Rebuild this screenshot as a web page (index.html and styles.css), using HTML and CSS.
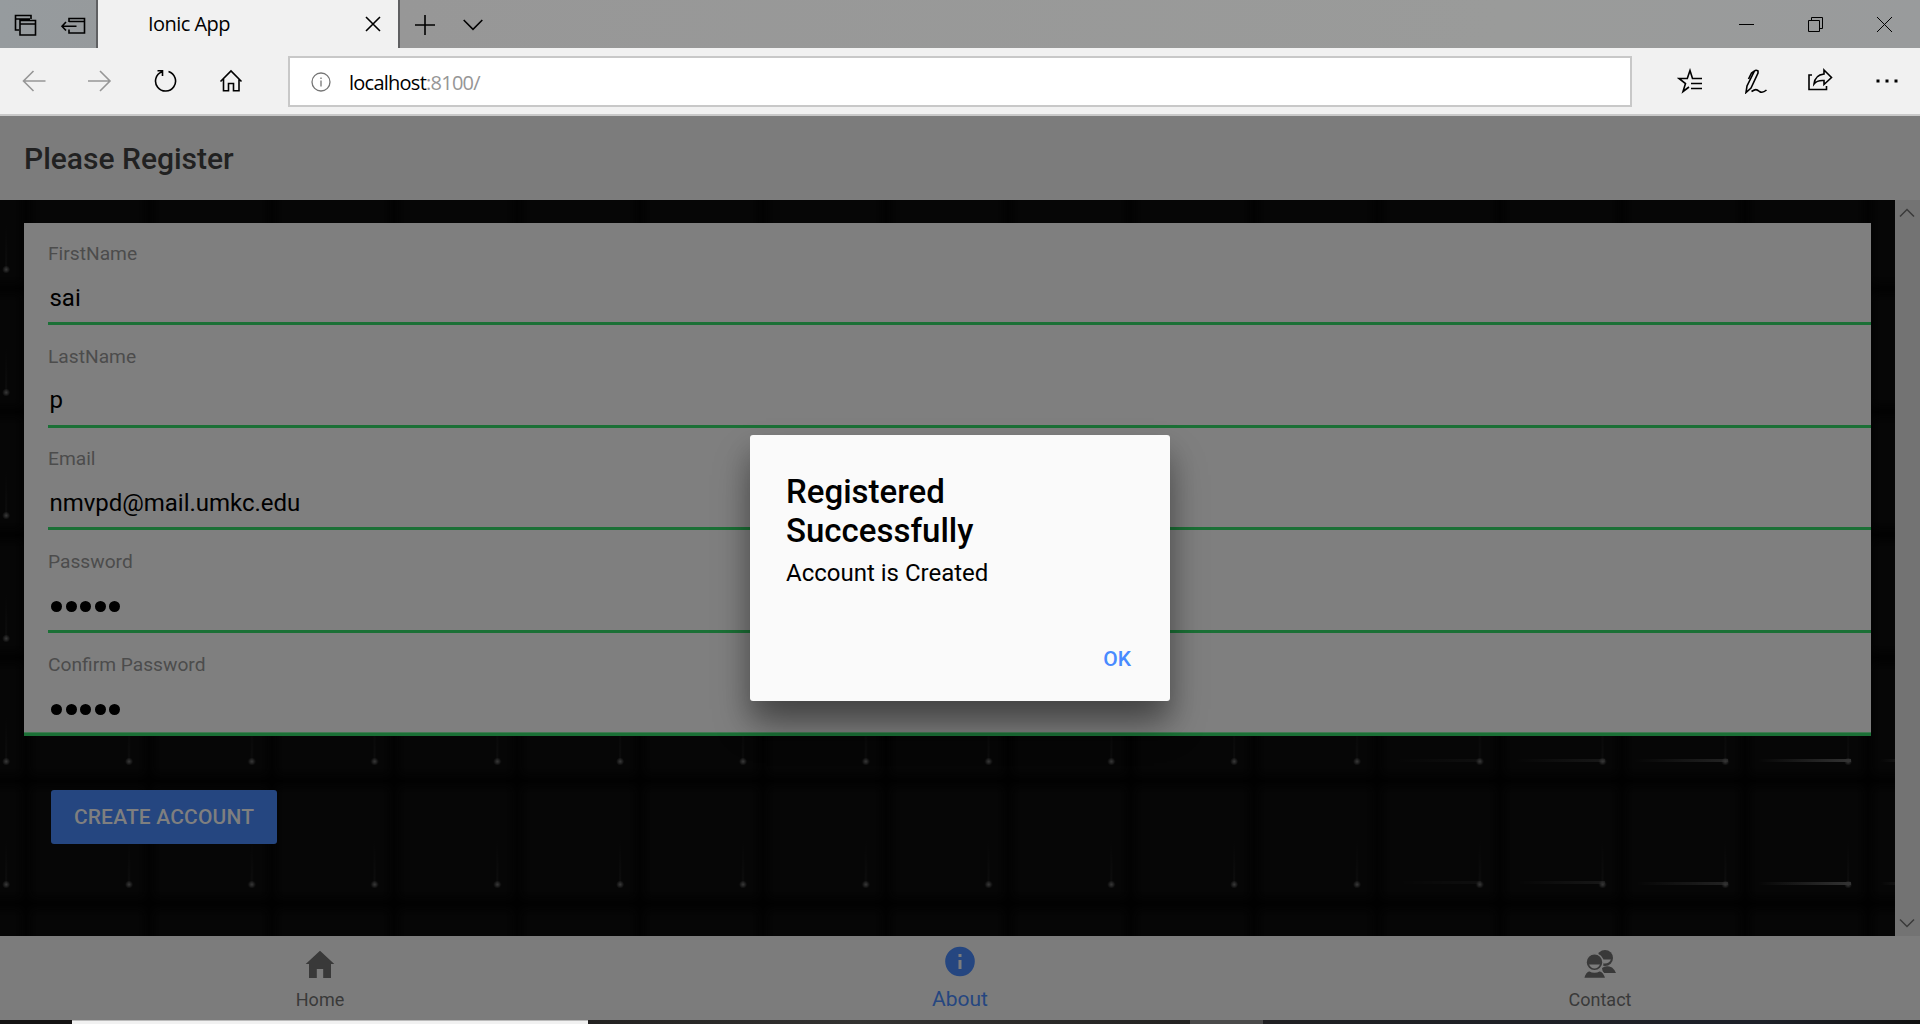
FILE: index.html
```html
<!DOCTYPE html>
<html lang="en">
<head>
<meta charset="utf-8">
<title>Ionic App</title>
<link rel="stylesheet" href="styles.css">
</head>
<body>
<div class="window">
  <header class="titlebar">
    <div class="tab-tools">
      <svg class="ico" width="24" height="24" viewBox="0 0 24 24"><path d="M6 17H2.500V2.500H18V6M2.500 6H17M7 7.500H22.500V22H7ZM7 11H22.500"/></svg>
      <svg class="ico" width="26" height="24" viewBox="0 0 26 24"><path d="M9 9V5.500H24.500V20H9V16.500M9 8.500H24.500M2 13.200H16.500M6 9L2 13.200L6 17.500"/></svg>
    </div>
    <div class="tab">
      <span class="tab-title">Ionic App</span>
      <svg class="ico" width="16" height="16" viewBox="0 0 16 16"><path d="M1 1L15 15M15 1L1 15"/></svg>
    </div>
    <div class="tab-actions">
      <svg class="ico" width="20" height="20" viewBox="0 0 20 20"><path d="M10 0V20M0 10H20"/></svg>
      <svg class="ico" width="20" height="12" viewBox="0 0 20 12"><path d="M.7 1L10 10.300L19.300 1"/></svg>
    </div>
    <div class="caption">
      <svg class="thin" width="15" height="15" viewBox="0 0 15 15"><path d="M0 7.500H15"/></svg>
      <svg class="thin" width="15" height="15" viewBox="0 0 15 15"><path d="M.5 3.500H11.500V14.500H.5ZM3.500 3.500V.5H14.500V11.500H11.500"/></svg>
      <svg class="thin" width="15" height="15" viewBox="0 0 15 15"><path d="M0 0L15 15M15 0L0 15"/></svg>
    </div>
  </header>
  <div class="navbar">
    <div class="nav-buttons">
      <svg class="ico off" width="24" height="24" viewBox="0 0 24 24"><path d="M11.500 2L1.500 12L11.500 22M1.500 12H23.500"/></svg>
      <svg class="ico off" width="24" height="24" viewBox="0 0 24 24"><path d="M12 2L22 12L12 22M0 12H22"/></svg>
      <svg class="ico" width="24" height="24" viewBox="0 0 24 24"><path d="M15.500 2.500A10 10 0 1 1 9 2.700M4.500 1.700H9.500V7" /></svg>
      <svg class="ico" width="24" height="24" viewBox="0 0 24 24"><path d="M1.500 12.500L12 2L22.500 12.500M4.500 10V21.700H9.500V14.500H14.500V21.700H20V10"/></svg>
    </div>
    <div class="address">
      <svg class="site" width="20" height="20" viewBox="0 0 20 20"><circle cx="10" cy="10" r="9"/><path d="M10 8.500V14.500M10 5.500V7"/></svg>
      <span>localhost<i>:8100/</i></span>
    </div>
    <div class="nav-tools">
      <svg class="ico" width="26" height="26" viewBox="0 0 26 26"><path d="M25 10.500H15.500L13 2.500L10.300 10.500H2L8.500 15.500L6 23.500L12 19M14 15.500H25M14 20.500H25"/></svg>
      <svg class="ico" width="26" height="26" viewBox="0 0 26 26"><path d="M4 24.500L5 18L12.500 3Q14 1.500 16 3V5L9 20ZM12.500 3L9.500 5L6.500 11M9.500 23.500C13.500 21 14.500 21 17.500 23.500Q20.500 25.500 24.500 22"/></svg>
      <svg class="ico" width="26" height="26" viewBox="0 0 26 26"><path d="M5 7H2V21.500H19.500V18M17 2L24.500 9.500L17 16.500V12.500Q10 12 7 16Q8 7 17 6Z"/></svg>
      <svg class="dots" width="26" height="26" viewBox="0 0 26 26"><path d="M4.500 11.500H7.500V14.500H4.500ZM13.500 11.500H16.500V14.500H13.500ZM22.500 11.500H25.500V14.500H22.500Z"/></svg>
    </div>
  </div>

  <main class="app">
    <div class="app-header">Please Register</div>
    <div class="scroller">
      <div class="content">
        <svg class="keys" width="1895" height="736" viewBox="0 0 1895 736">
          <defs>
            <filter id="soft" x="-10%" y="-10%" width="120%" height="120%" color-interpolation-filters="sRGB"><feGaussianBlur stdDeviation="4"/></filter>
            <linearGradient id="tail" x1="0" y1="0" x2="0" y2="1"><stop offset="0" stop-color="#1c1c1c" stop-opacity="0"/><stop offset="1" stop-color="#1c1c1c"/></linearGradient>
            <linearGradient id="shine" x1="0" y1="0" x2="1" y2="0"><stop offset="0" stop-color="#333" stop-opacity="0"/><stop offset="1" stop-color="#333"/></linearGradient>
            <radialGradient id="spark"><stop offset="0" stop-color="#3a3a3a"/><stop offset="1" stop-color="#3a3a3a" stop-opacity="0"/></radialGradient>
            <pattern id="key" width="122.800" height="123" patternUnits="userSpaceOnUse" x="26" y="89">
              <rect width="122.800" height="123" fill="#010101"/>
              <rect x="4" y="5" width="115" height="112" rx="6" fill="#060606" filter="url(#soft)"/>
              <rect x="102" y="60" width="2" height="42" fill="url(#tail)" opacity=".3"/>
              <circle cx="103" cy="103.500" r="4" fill="url(#spark)"/>
            </pattern>
          </defs>
          <rect width="1895" height="736" fill="url(#key)"/>
          <g fill="url(#shine)">
            <g opacity=".2"><rect x="1395" y="559" width="86" height="3"/><rect x="1395" y="681" width="86" height="3"/></g>
            <g opacity=".4"><rect x="1515" y="559" width="90" height="3"/><rect x="1515" y="681" width="90" height="3"/></g>
            <g opacity=".65"><rect x="1635" y="559" width="93" height="3"/><rect x="1635" y="682" width="93" height="3"/></g>
            <g><rect x="1758" y="559" width="93" height="3"/><rect x="1758" y="682" width="93" height="3"/></g>
            <g opacity=".8"><rect x="1880" y="559" width="50" height="3"/><rect x="1880" y="682" width="50" height="3"/></g>
          </g>
        </svg>
        <form class="card">
          <div class="field"><label>FirstName</label><span class="value">sai</span></div>
          <div class="field low"><label>LastName</label><span class="value">p</span></div>
          <div class="field"><label>Email</label><span class="value">nmvpd@mail.umkc.edu</span></div>
          <div class="field low"><label>Password</label><span class="secret"><b></b><b></b><b></b><b></b><b></b></span></div>
          <div class="field low"><label>Confirm Password</label><span class="secret"><b></b><b></b><b></b><b></b><b></b></span></div>
        </form>
        <button class="create" type="button">CREATE ACCOUNT</button>
      </div>
      <div class="scrollbar">
        <svg width="16" height="10" viewBox="0 0 16 10"><path d="M1 8.500L8 1.500L15 8.500"/></svg>
        <svg width="16" height="10" viewBox="0 0 16 10"><path d="M1 1.500L8 8.500L15 1.500"/></svg>
      </div>
    </div>
    <nav class="tabs">
      <div class="tab-item">
        <svg width="36" height="36" viewBox="0 0 36 36"><path d="M18 4.800L3.700 18H7V32H14.800V23H21.200V32H29V18H32.300Z"/></svg>
        <span>Home</span>
      </div>
      <div class="tab-item active">
        <svg width="36" height="36" viewBox="0 0 36 36"><path fill-rule="evenodd" d="M18 2.700a14.800 14.800 0 1 0 0 29.600a14.800 14.800 0 0 0 0-29.600ZM16.500 10H19.500V13H16.500ZM16.500 16H19.500V25H16.500Z"/></svg>
        <span>About</span>
      </div>
      <div class="tab-item">
        <svg width="36" height="36" viewBox="0 0 36 36"><circle cx="23" cy="12" r="8"/><path class="cut" d="M17 13.500H29Q27 18 22 17.500Z"/><path d="M20 22Q24 19 30 21.500Q33 24 34 27H21Z"/><circle class="ring" cx="12.500" cy="16.200" r="8.500"/><path class="cut" d="M7 18.500H18Q16 22.500 12.500 22.500Q9 22.500 7 18.500Z"/><path class="ring" d="M1.500 32.500Q3 25.500 7.500 24.500Q12.500 27.500 17.500 24.500Q22 25.500 24 32.500Z"/></svg>
        <span>Contact</span>
      </div>
    </nav>
    <div class="dialog" role="dialog">
      <h2>Registered Successfully</h2>
      <p>Account is Created</p>
      <button type="button">OK</button>
    </div>
  </main>
  <footer class="taskbar"><span class="task-main"></span><span class="task-mid"></span><span class="task-active"></span><span class="task-rest"></span></footer>
</div>
</body>
</html>
```
FILE: styles.css
```css
* { box-sizing: border-box; }
body { margin: 0; overflow: hidden; font-family: Roboto, "Liberation Sans", sans-serif; }
svg { display: block; flex: none; }
button { font-family: inherit; border: 0; }

.window { width: 1920px; height: 1024px; display: flex; flex-direction: column; }
.ico { fill: none; stroke: #000; stroke-width: 1.6; }
.ico.off { stroke: #969696; }
.thin { fill: none; stroke: #000; stroke-width: 1; }

.titlebar { height: 48px; flex: none; display: flex; background: linear-gradient(90deg, #969b9e, #979797 400px, #9a9b9a 1500px, #999b9c); }
.tab-tools { width: 98px; border-right: 2px solid #5f6062; display: flex; align-items: center; gap: 23px; padding: 2px 0 0 12.500px; }
.tab { width: 302px; background: #f1f1f1; border-right: 2px solid #5f6062; display: flex; align-items: center; justify-content: space-between; padding: 0 17px 0 50px; }
.tab-title { font: 20px/26px "Open Sans", sans-serif; letter-spacing: -.55px; }
.tab-actions { display: flex; align-items: center; gap: 28px; padding: 2px 0 0 15px; }
.caption { margin-left: auto; display: flex; align-items: center; gap: 54px; padding: 1px 28px 0 0; }

.navbar { height: 68px; flex: none; display: flex; background: #f1f1f1; border-bottom: 2px solid #c9c9c9; padding-top: 8px; }
.nav-buttons { width: 288px; display: flex; gap: 41.500px; padding: 13px 0 0 22px; }
.address { width: 1344px; height: 51px; background: #fff; border: 2px solid #c8c8c8; display: flex; align-items: center; gap: 18px; padding: 1px 0 0 21px; font: 20px/26px "Open Sans", sans-serif; letter-spacing: -.75px; }
.address span { padding-top: 1px; }
.address i { font-style: normal; color: #969696; }
.site { fill: none; stroke: #767676; stroke-width: 1.300; }
.nav-tools { display: flex; gap: 39px; padding: 12px 0 0 45px; }
.dots { fill: #000; }

.app { position: relative; height: 904px; flex: none; display: flex; flex-direction: column; }
.app-header { height: 84px; flex: none; background: #7c7c7c; color: #212121; padding-left: 24px; font-size: 30px; line-height: 85px; font-weight: 500; }
.scroller { height: 736px; display: flex; }
.content { position: relative; width: 1895px; padding: 23px 24px 0; overflow: hidden; }
.keys { position: absolute; left: 0; top: 0; z-index: -1; }
.card { height: 513px; background: #7f7f7f; border-bottom: 3px solid #1b7036; display: grid; grid-template-rows: 102px 103px 102px 103px 100px; padding-left: 24px; }
.field { border-bottom: 3px solid #1b7036; display: flex; flex-direction: column; }
.field:last-child { border-bottom: 1px solid #417b52; margin-left: -24px; padding-left: 24px; }
.field label { font-size: 19.200px; line-height: 24px; color: #4c4c4c; padding-top: 19px; }
.field.low label { padding-top: 20px; }
.value { font-size: 24px; line-height: 28px; color: #000; letter-spacing: -.03px; padding: 18px 0 0 1.500px; }
.low .value { padding-top: 17px; }
.secret { display: flex; gap: 3.600px; padding: 26.500px 0 0 3px; }
.secret b { width: 11px; height: 11px; border-radius: 50%; background: #000; }
.create { display: block; width: 226px; height: 54px; margin: 54px 0 0 27px; padding: 0; border-radius: 3px; background: #254680; color: #7f7f7f; font-size: 21px; font-weight: 500; letter-spacing: .15px; }
.scrollbar { width: 25px; background: #737373; display: flex; flex-direction: column; justify-content: space-between; padding: 8px 5px 8px 4px; }
.scrollbar svg { fill: none; stroke: #3a3a3a; stroke-width: 1.500; }

.tabs { height: 84px; flex: none; background: #7c7c7c; display: grid; grid-template-columns: repeat(3, 1fr); }
.tab-item { display: flex; flex-direction: column; align-items: center; padding-top: 10px; color: #393939; font-size: 18px; line-height: 22px; }
.tab-item svg { fill: #393939; overflow: visible; }
.tab-item span { padding-top: 7px; }
.tab-item.active { color: #254680; font-size: 21px; line-height: 25px; padding-top: 8px; }
.tab-item.active svg { fill: #254680; }
.tab-item .cut { fill: #7c7c7c; }
.ring { stroke: #7c7c7c; stroke-width: 1.500; }

.dialog { position: absolute; left: 750px; top: 319px; width: 420px; height: 266px; padding: 37px 36px 0; background: #fafafa; border-radius: 3px; box-shadow: 0 24px 36px -3px rgba(0,0,0,.4), 0 16px 24px 2px rgba(0,0,0,.14); display: flex; flex-direction: column; }
.dialog h2 { margin: 0; font-size: 33px; line-height: 39px; font-weight: 500; }
.dialog p { margin: 8px 0 0; font-size: 24px; line-height: 30px; }
.dialog button { align-self: flex-end; margin-top: 59px; padding: 0 3px 0 0; background: none; color: #488aff; font-size: 21px; line-height: 25px; font-weight: 500; }

.taskbar { height: 4px; flex: none; display: flex; background: #141212; padding-left: 72px; }
.task-main { width: 516px; background: #f1f1f1; border-top: 1px solid #bbb; }
.task-mid { width: 602px; background: linear-gradient(90deg, #222120, #333231 45%, #232221); }
.task-active { width: 73px; background: #4b4a4a; }
.task-rest { flex: 1; background: linear-gradient(90deg, #1f1f22, #1d2028 500px, #101010); }
```
